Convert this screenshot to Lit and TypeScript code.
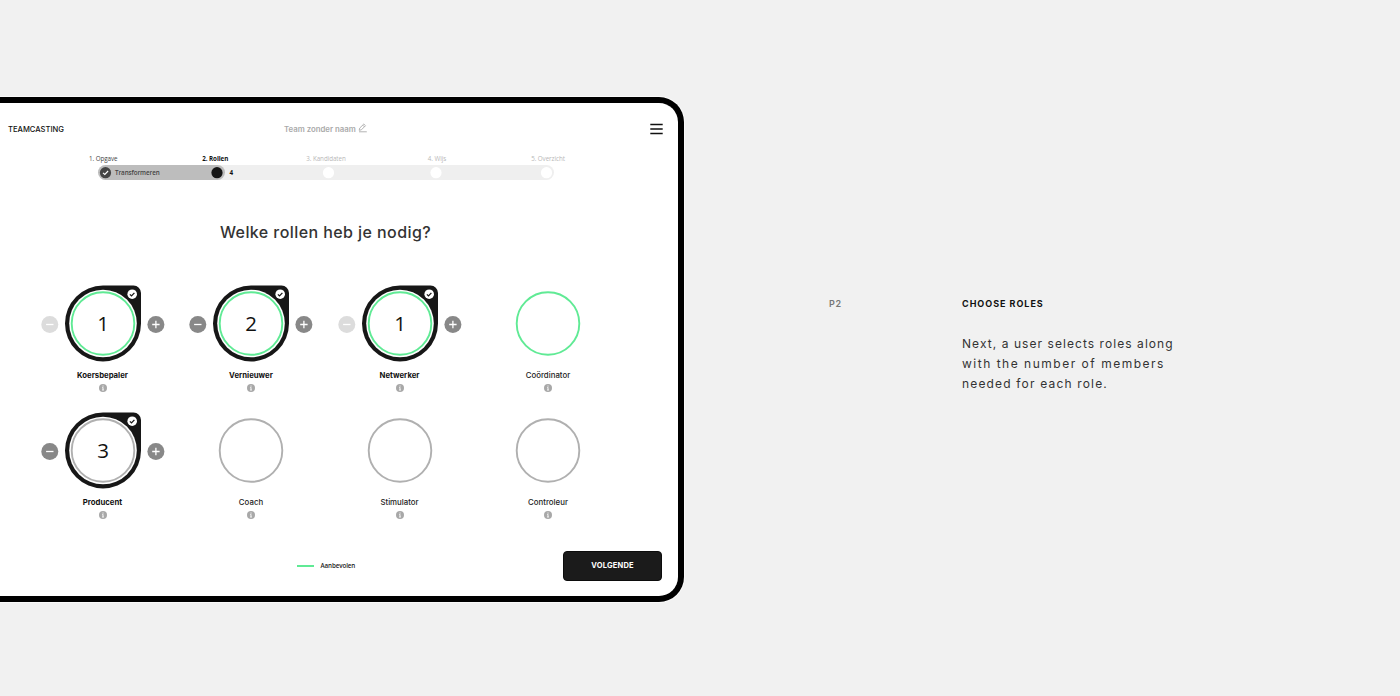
import { LitElement, html, svg, css, nothing } from "lit";
import { customElement, property } from "lit/decorators.js";
import { classMap } from "lit/directives/class-map.js";

interface Role {
  name: string;
  count: number;
  recommended: boolean;
}

const ROLES: Role[] = [
  { name: "Koersbepaler", count: 1, recommended: true },
  { name: "Vernieuwer", count: 2, recommended: true },
  { name: "Netwerker", count: 1, recommended: true },
  { name: "Coördinator", count: 0, recommended: true },
  { name: "Producent", count: 3, recommended: false },
  { name: "Coach", count: 0, recommended: false },
  { name: "Stimulator", count: 0, recommended: false },
  { name: "Controleur", count: 0, recommended: false },
];

@customElement("role-card")
export class RoleCard extends LitElement {
  @property({ attribute: false }) role!: Role;

  static styles = css`
    :host {
      display: flex;
      flex-direction: column;
      align-items: center;
      height: 127px;
      font-family: Inter, sans-serif;
    }
    .dial {
      display: block;
      width: 126px;
      height: 78px;
      flex: none;
    }
    .count {
      font: 400 20.5px "Open Sans", sans-serif;
      fill: #111;
      text-anchor: middle;
    }
    .name {
      margin-top: 6px;
      font: 500 7.85px/14px Inter, sans-serif;
      color: #222;
      white-space: nowrap;
    }
    .name.selected {
      font-weight: 700;
      font-size: 7.75px;
      color: #111;
    }
    .info {
      display: block;
      width: 8px;
      height: 8px;
      margin-top: 1.5px;
    }
  `;

  render() {
    const { name, count, recommended } = this.role;
    const selected = count > 0;
    const ring = recommended ? "#60ea95" : "#b0b0b0";
    return html`
      <svg class="dial" viewBox="0 -0.5 126 78">
        ${selected
          ? svg`
            <path d="M63 1H93.500a7.500 7.500 0 0 1 7.500 7.500V39A38 38 0 1 1 63 1Z" fill="#171717"/>
            <circle cx="63" cy="39" r="33.800" fill="#fff"/>
            <circle cx="92.200" cy="9.700" r="4.800" fill="#fff"/>
            <path d="M89.900 9.900l1.600 1.500 2.900-3" fill="none" stroke="#171717" stroke-width="1.300"/>
            <circle cx="9.800" cy="40" r="8.500" fill=${count > 1 ? "#888" : "#dcdcdc"}/>
            <path d="M6.100 40h7.400" stroke="#fff" stroke-width="1.300"/>
            <circle cx="115.900" cy="40" r="8.500" fill="#888"/>
            <path d="M112.200 40h7.400M115.900 36.300v7.400" stroke="#fff" stroke-width="1.300"/>
            <text class="count" x="63.200" y="46.500">${count}</text>`
          : nothing}
        <circle cx="63" cy="39" r="31.300" fill="none" stroke=${ring} stroke-width="1.900"/>
      </svg>
      <div class=${classMap({ name: true, selected })}>${name}</div>
      <svg class="info" viewBox="0 0 8 8">
        <circle cx="4" cy="4" r="4" fill="#a8a8a8"/>
        <path d="M4 1.500v1.100M4 3.300v2.900M3.300 3.600H4M3.200 6h1.600" stroke="#fff" stroke-width=".9" fill="none"/>
      </svg>
    `;
  }
}

@customElement("app-root")
export class AppRoot extends LitElement {
  static styles = css`
    :host {
      display: flex;
      align-items: flex-start;
      width: 1400px;
      height: 696px;
      overflow: hidden;
      background: #f1f1f1;
      font-family: Inter, sans-serif;
      color: #111;
    }
    .device {
      box-sizing: border-box;
      flex: none;
      display: flex;
      flex-direction: column;
      width: 684px;
      height: 505px;
      margin-top: 97px;
      border: 6px solid #000;
      border-left: 0;
      border-radius: 0 25px 25px 0;
      background: #fff;
      box-shadow: 0 0 0 1px #fafafa;
    }
    .top {
      box-sizing: border-box;
      display: grid;
      grid-template-columns: 276px 1fr auto;
      align-items: center;
      height: 50px;
      padding: 2px 15px 0 8px;
    }
    .brand { font-size: 7.6px; font-weight: 500; }
    .team {
      display: flex;
      align-items: center;
      gap: 2.5px;
      font-size: 7.8px;
      font-weight: 600;
      color: #aaa;
    }
    .pen { width: 9px; height: 10px; margin-top: -3px; }
    .menu { width: 13px; height: 12px; }
    .labels {
      display: grid;
      grid-template-columns: 112.5px 111.5px 110px 112px 110px;
      margin-left: 47px;
      height: 11px;
      font: 400 6.25px/11px "Open Sans", sans-serif;
      letter-spacing: -.07px;
      color: #b8b8b8;
      text-align: center;
    }
    .done { color: #444; }
    .current { color: #111; font-weight: 700; }
    .track {
      display: flex;
      width: 456px;
      height: 15px;
      margin: 1px 0 0 98px;
      border-radius: 8px;
      background: #efefef;
    }
    .track svg { display: block; overflow: visible; }
    .bar-label { font: 600 6.25px "Open Sans", sans-serif; letter-spacing: -.07px; fill: #444; }
    .bar-count { font: 700 6.25px "Open Sans", sans-serif; fill: #111; }
    h1 {
      margin: 41px 0 0;
      width: 651px;
      text-align: center;
      font-size: 16px;
      line-height: 22px;
      font-weight: 500;
      letter-spacing: .42px;
      color: #333;
    }
    .roles {
      display: grid;
      grid-template-columns: repeat(4, 148.5px);
      margin: 41px 0 0 28.25px;
    }
    .foot {
      display: grid;
      grid-template-columns: 23.5px 1fr 99px;
      align-items: center;
      margin-top: 12.5px;
      padding: 0 16px 0 297px;
    }
    .swatch { width: 17px; height: 2px; background: #60ea95; }
    .legend { font: 600 6.25px/10px "Open Sans", sans-serif; letter-spacing: -.1px; color: #222; }
    .next {
      height: 30px;
      padding: 0;
      border: 1px solid #0c0c0c;
      border-radius: 4px;
      background: #1b1b1b;
      color: #fff;
      font: 700 7.5px Inter, sans-serif;
      letter-spacing: .2px;
    }
    .page { width: 133px; margin: 297px 0 0 145px; font-size: 9px; line-height: 14px; font-weight: 600; color: #777; letter-spacing: .6px; }
    .copy { margin-top: 297px; }
    h2 { margin: 0; font-size: 9px; line-height: 14px; font-weight: 700; letter-spacing: .97px; }
    p { margin: 23px 0 0; font-size: 12px; line-height: 20px; color: #333; letter-spacing: 1.06px; }
    .line { display: block; white-space: nowrap; }
    .loose { letter-spacing: 1.51px; }
    .last { letter-spacing: 1.17px; }
  `;

  render() {
    return html`
      <main class="device">
        <header class="top">
          <span class="brand">TEAMCASTING</span>
          <span class="team">
            <span class="team-name">Team zonder naam</span>
            <svg class="pen" viewBox="0 0 9 10" fill="none" stroke="#aaa" stroke-width=".9">
              <path d="M1 8.800h7.800M1.200 7.300l.5-2.200L5.800 1l1.700 1.700-4.100 4.100zM4.700 2.100l1.700 1.700"/>
            </svg>
          </span>
          <svg class="menu" viewBox="0 0 13 12" stroke="#111" stroke-width="1.500">
            <path d="M.3 1.500h12.400M.3 6h12.400M.3 10.500h12.400"/>
          </svg>
        </header>
        <nav class="labels">
          <span class="done">1. Opgave</span>
          <span class="current">2. Rollen</span>
          <span>3. Kandidaten</span>
          <span>4. Wijs</span>
          <span>5. Overzicht</span>
        </nav>
        <div class="track">
          <svg width="456" height="15" viewBox="0 0 456 15">
            <rect width="127" height="15" rx="7.500" fill="#bdbdbd"/>
            <circle cx="7.500" cy="7.700" r="5.600" fill="#444"/>
            <path d="M5 7.800l1.800 1.700 3.300-3.500" fill="none" stroke="#fff" stroke-width="1.100"/>
            <text class="bar-label" x="17" y="9.800">Transformeren</text>
            <circle cx="119" cy="7.700" r="5.600" fill="#151515"/>
            <text class="bar-count" x="131.500" y="9.800">4</text>
            ${[230.5, 338, 448.5].map((x) => svg`<circle cx=${x} cy="7.700" r="5.600" fill="#fff"/>`)}
          </svg>
        </div>
        <h1>Welke rollen heb je nodig?</h1>
        <section class="roles">
          ${ROLES.map((role) => html`<role-card .role=${role}></role-card>`)}
        </section>
        <footer class="foot">
          <span class="swatch"></span>
          <span class="legend">Aanbevolen</span>
          <button class="next">VOLGENDE</button>
        </footer>
      </main>
      <aside class="page">P2</aside>
      <article class="copy">
        <h2>CHOOSE ROLES</h2>
        <p>
          <span class="line">Next, a user selects roles along</span>
          <span class="line loose">with the number of members</span>
          <span class="line last">needed for each role.</span>
        </p>
      </article>
    `;
  }
}
